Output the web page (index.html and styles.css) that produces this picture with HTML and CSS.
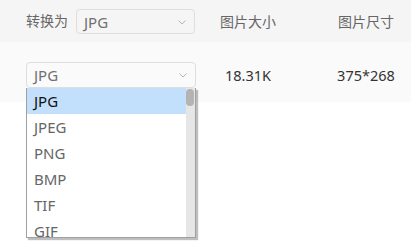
FILE: index.html
```html
<!DOCTYPE html>
<html lang="zh-CN">
<head>
  <meta charset="UTF-8" />
  <title>图片转换</title>
  <link rel="stylesheet" href="styles.css">
</head>
<body>
  <div class="table">
    <!-- Header -->
    <div class="head">
      <div class="cell cell-first">
        <span class="label">转换为</span>
        <div class="select select-head">
          <span>JPG</span>
          <svg class="chevron" width="8" height="5" viewBox="0 0 8 5"><path d="M0.5 0.5 L4 4 L7.5 0.5" fill="none" stroke="#b5b5b5" stroke-width="1"/></svg>
        </div>
      </div>
      <div class="cell cell-center">图片大小</div>
      <div class="cell cell-center cell-last">图片尺寸</div>
    </div>

    <!-- Row -->
    <div class="row">
      <div class="cell cell-first">
        <div class="select-wrap">
          <div class="select select-row">
            <span>JPG</span>
            <svg class="chevron" width="8" height="5" viewBox="0 0 8 5"><path d="M0.5 0.5 L4 4 L7.5 0.5" fill="none" stroke="#b5b5b5" stroke-width="1"/></svg>
          </div>
          <div class="dropdown">
            <ul class="options">
              <li class="active">JPG</li>
              <li>JPEG</li>
              <li>PNG</li>
              <li>BMP</li>
              <li>TIF</li>
              <li>GIF</li>
            </ul>
            <div class="scrollbar"><div class="thumb"></div></div>
          </div>
        </div>
      </div>
      <div class="cell cell-center value">18.31K</div>
      <div class="cell cell-center cell-last value">375*268</div>
    </div>
  </div>
</body>
</html>
```

FILE: styles.css
```css
* { box-sizing: border-box; }
body {
  margin: 0;
  min-height: 248px;
  background: #fff;
  font-family: 'Noto Sans', 'Noto Sans CJK SC', sans-serif;
  color: #666;
}

.head, .row {
  display: grid;
  grid-template-columns: 170px 104px 1fr;
  padding-left: 26px;
  align-items: center;
}
.head {
  height: 42px;
  background: #f5f5f5;
  font-size: 14px;
}
.row {
  height: 60px;
  padding-top: 6px;
  background: #fafafa;
  font-size: 14px;
}

.cell-first {
  display: flex;
  align-items: center;
}
.cell-center {
  text-align: center;
}
.cell-last {
  padding-left: 21px;
}
.label {
  width: 50px;
  color: #666;
  line-height: 20px;
}

.select {
  display: flex;
  align-items: center;
  justify-content: space-between;
  border: 1px solid #dedede;
  border-radius: 4px;
  padding: 0 8px 0 7px;
  color: #707070;
  font-size: 15px;
}
.select-head {
  width: 119px;
  height: 25px;
  background: #f5f5f5;
  margin-top: 1px;
}
.select-row {
  width: 170px;
  height: 26px;
  background: #fafafa;
}
.chevron { margin-top: 1px; }

.value {
  color: #333;
  font-size: 14.5px;
}

.select-wrap {
  position: relative;
}
.dropdown {
  position: absolute;
  top: 26px;
  left: 0;
  width: 170px;
  height: 150px;
  background: #fff;
  border: 1px solid #a0a0a0;
  border-top: none;
  box-shadow: 2px 2px 1px rgba(0, 0, 0, 0.25);
  display: flex;
  overflow: hidden;
  z-index: 10;
}
.options {
  list-style: none;
  margin: 0;
  padding: 0;
  flex: 1;
}
.options li {
  height: 26px;
  line-height: 26px;
  padding-left: 7px;
  font-size: 15px;
  color: #666;
}
.options li.active {
  background: #c2e0fb;
  color: #111;
}
.scrollbar {
  width: 9px;
  background: #e6e6e6;
  padding: 1px 1px 0 0;
}
.thumb {
  height: 17px;
  border-radius: 4px;
  background: #b3b3b3;
}
```
